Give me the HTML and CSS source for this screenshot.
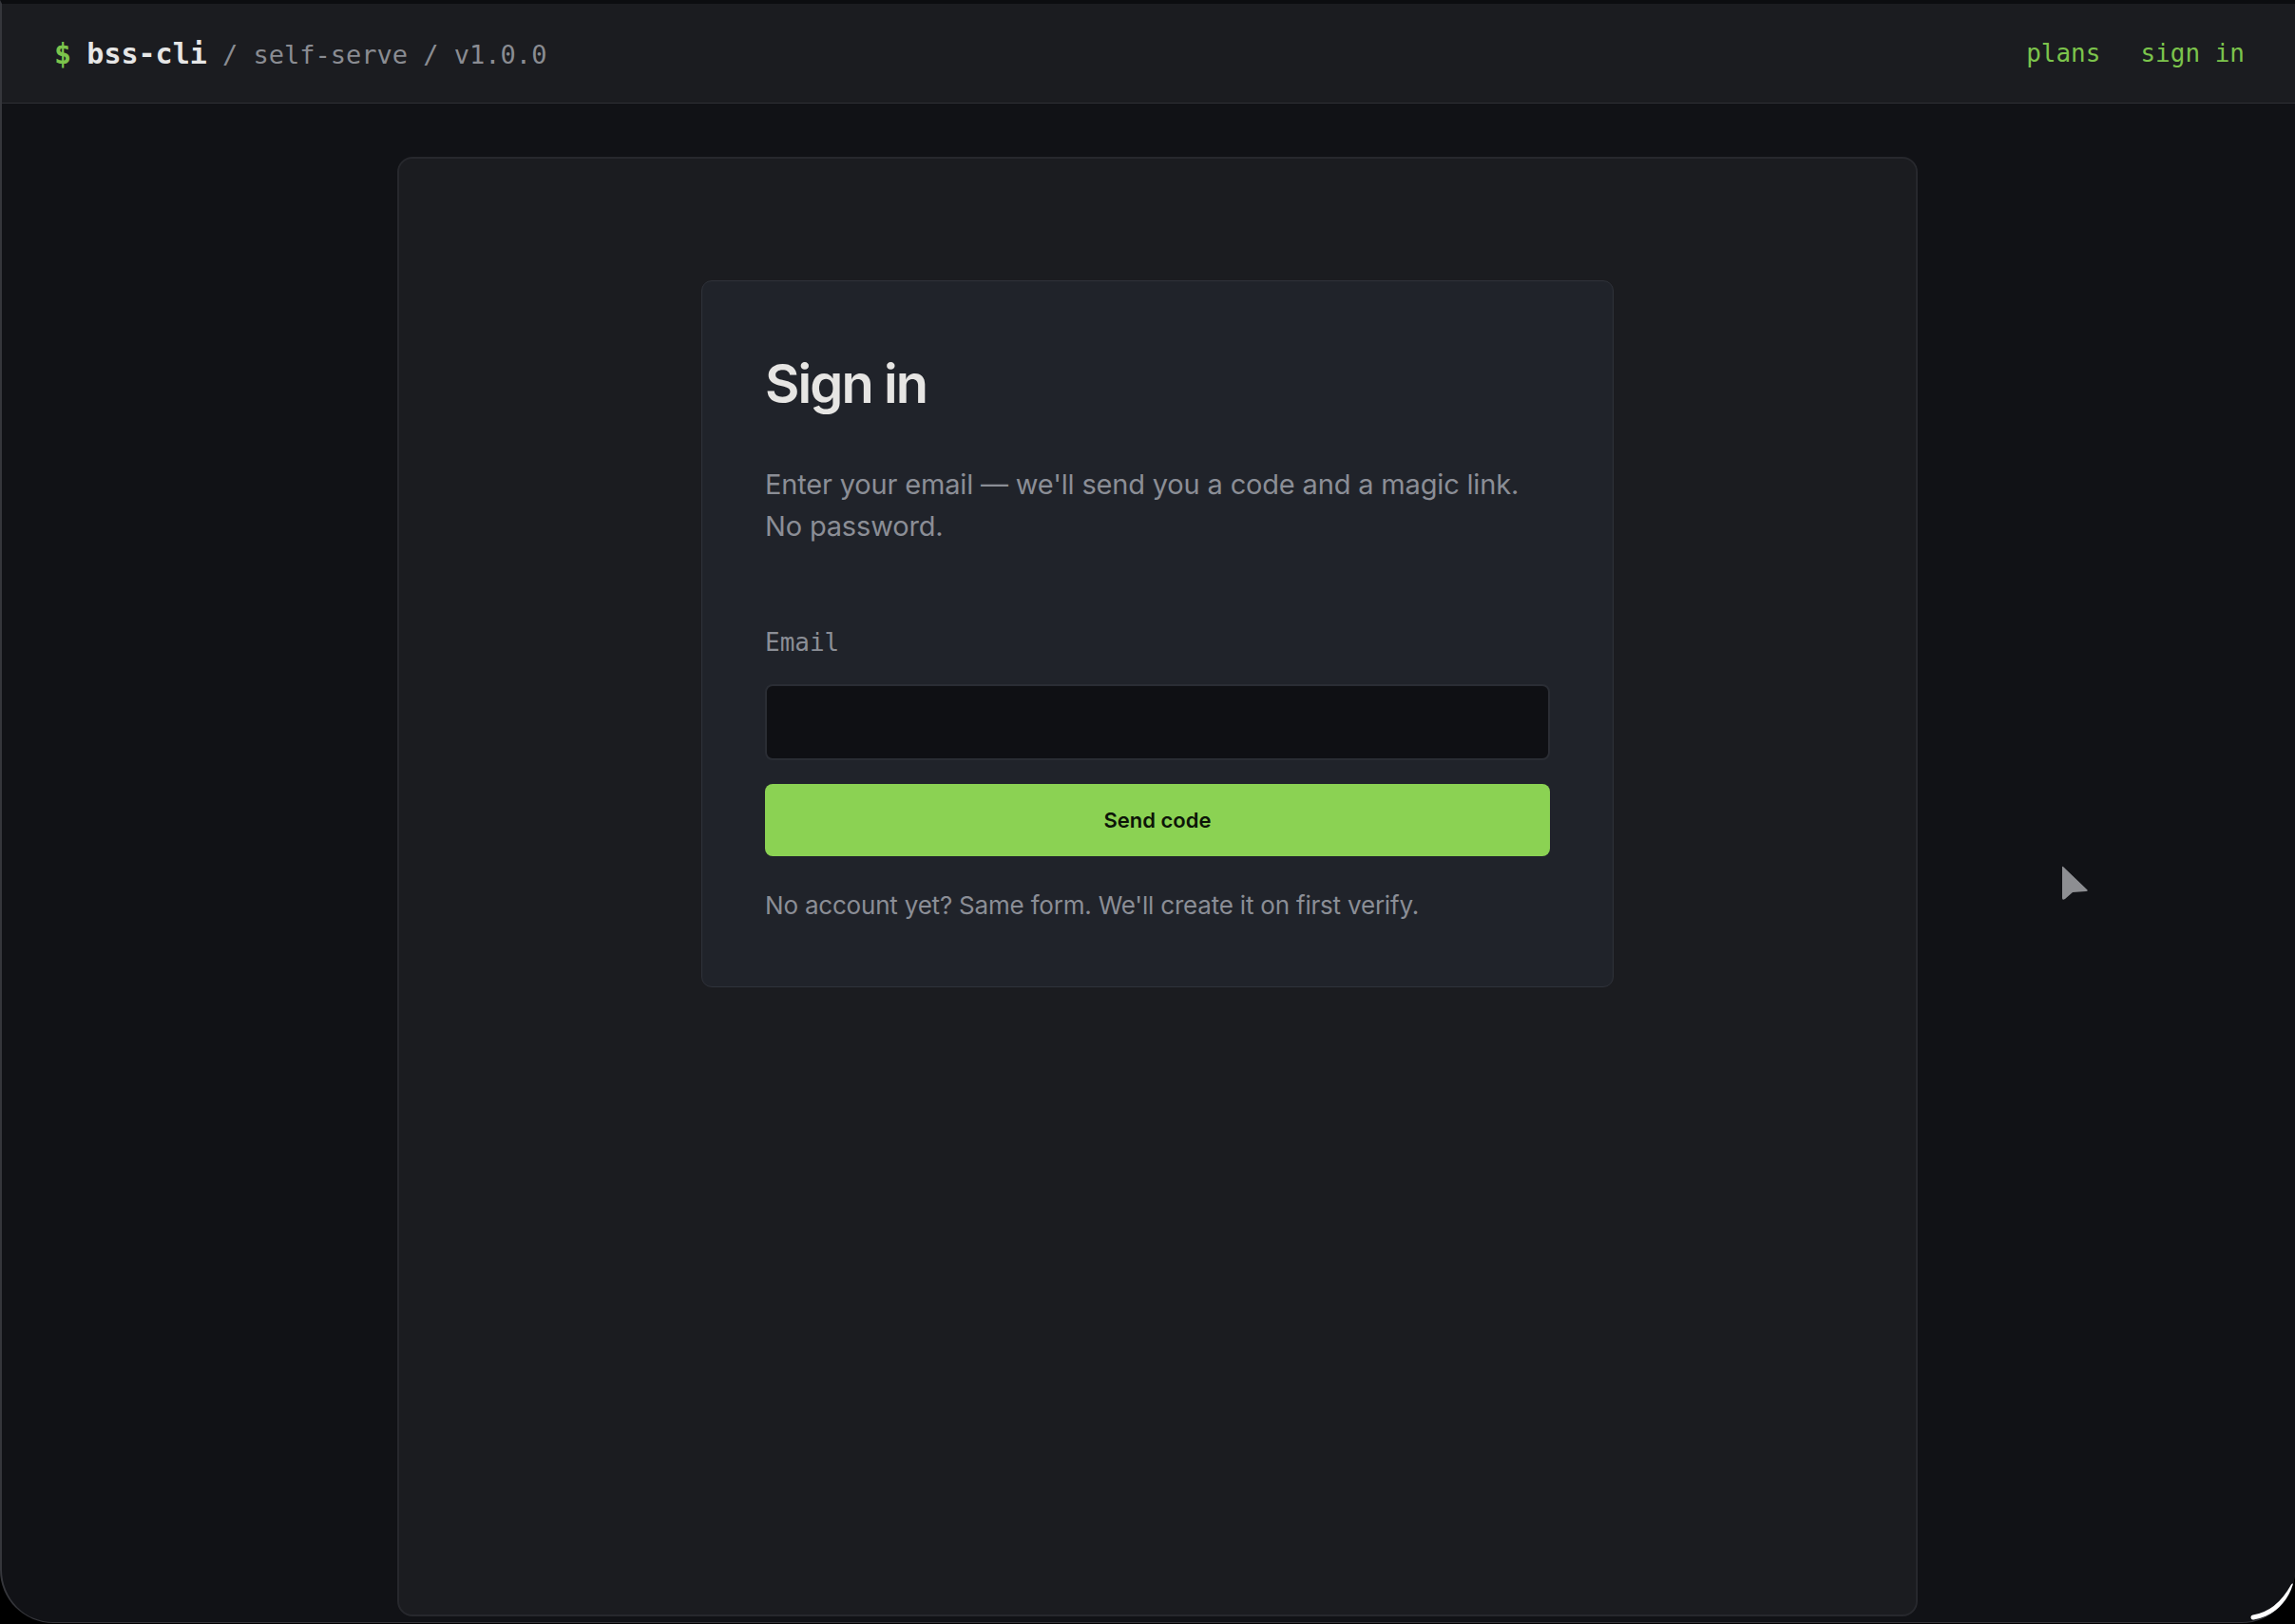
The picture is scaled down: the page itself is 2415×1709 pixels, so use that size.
FILE: index.html
```html
<!DOCTYPE html>
<html lang="en">
<head>
  <meta charset="UTF-8">
  <title>Sign in · bss-cli</title>
  <link rel="stylesheet" href="styles.css">
</head>
<body>
  <div class="window">
    <header class="topbar">
      <div class="brand">
        <span class="prompt">$</span> <span class="name">bss-cli</span><span class="crumbs"> / self-serve / v1.0.0</span>
      </div>
      <nav class="nav">
        <a href="#">plans</a>
        <a href="#">sign in</a>
      </nav>
    </header>

    <main class="main">
      <section class="panel">
        <div class="card">
          <h1>Sign in</h1>
          <p class="lead">Enter your email — we'll send you a code and a magic link. No password.</p>

          <form class="form" onsubmit="return false">
            <label for="email">Email</label>
            <input id="email" type="email" autocomplete="email">
            <button type="submit">Send code</button>
          </form>

          <p class="hint">No account yet? Same form. We'll create it on first verify.</p>
        </div>
      </section>
    </main>

    <!-- mouse pointer left in the capture -->
    <svg class="pointer" width="32" height="40" viewBox="0 0 32 40">
      <path d="M3 2 Q2 1 2 3 L2 35 Q2 38 5 36 L13 29 L27 28 Q30 27.5 28 26 Z" fill="#8d8e92"/>
    </svg>
    <svg class="resize" width="48" height="50" viewBox="0 0 48 50">
      <path d="M4 45 Q30 41 46 12" fill="none" stroke="#fff" stroke-width="5" stroke-linecap="round"/>
    </svg>
  </div>
</body>
</html>
```

FILE: styles.css
```css
* {
  box-sizing: border-box;
}

html, body {
  margin: 0;
  padding: 0;
  background: #000;
}

body {
  font-family: 'Inter', 'Noto Sans', sans-serif;
  color: #e4e4e4;
  overflow: hidden;
}

.window {
  position: relative;
  height: 1708px;
  background: #111216;
  border-top: 4px solid #0c0d10;
  border-left: 2px solid #35363b;
  border-bottom: 1px solid #35363b;
  border-radius: 0 0 56px 56px;
  overflow: hidden;
}

/* top bar */

.topbar {
  display: flex;
  justify-content: space-between;
  align-items: center;
  height: 105px;
  padding: 0 53px 0 55px;
  background: #1b1c20;
  border-bottom: 1px solid #2e2f34;
  font-family: 'DejaVu Sans Mono', 'Liberation Mono', monospace;
}

.brand {
  font-size: 27px;
  white-space: nowrap;
}

.prompt {
  color: #7cc44c;
  font-weight: bold;
  font-size: 30px;
}

.name {
  color: #e6e6e6;
  font-weight: bold;
  font-size: 30px;
}

.crumbs {
  color: #8a8c92;
}

.nav {
  display: flex;
  gap: 42px;
  font-size: 26px;
}

.nav a {
  color: #7cc44c;
  text-decoration: none;
}

/* page */

.main {
  padding: 56px 0 0 19px;
}

.panel {
  width: 1600px;
  height: 1536px;
  margin: 0 auto;
  padding-top: 128px;
  background: #1b1c20;
  border: 2px solid #27282d;
  border-radius: 16px;
}

.card {
  width: 960px;
  margin: 0 auto;
  padding: 74px 66px 65px;
  background: #20232a;
  border: 1px solid #2f323a;
  border-radius: 11px;
}

h1 {
  margin: 0;
  font-size: 56px;
  line-height: 68px;
  font-weight: 600;
  color: #e6e5e3;
  letter-spacing: -1.9px;
}

.lead {
  margin: 50px 0 0;
  font-size: 29px;
  line-height: 44px;
  color: #8b8e96;
  letter-spacing: -0.17px;
}

.form {
  display: flex;
  flex-direction: column;
  margin-top: 84px;
}

label {
  font-family: 'DejaVu Sans Mono', 'Liberation Mono', monospace;
  font-size: 26px;
  line-height: 32px;
  color: #8b8e96;
  margin-bottom: 28px;
}

input {
  height: 80px;
  padding: 0 20px;
  background: #0f1014;
  border: 2px solid #2a2d34;
  border-radius: 8px;
  color: #e4e4e4;
  font-family: inherit;
  font-size: 26px;
  outline: none;
}

button {
  height: 76px;
  margin-top: 25px;
  background: #8bd253;
  color: #0d1508;
  border: none;
  border-radius: 8px;
  font-family: 'Inter', sans-serif;
  font-size: 22px;
  font-weight: 600;
  cursor: pointer;
}

.hint {
  margin: 32px 0 0;
  font-size: 26px;
  line-height: 40px;
  color: #8b8e96;
  letter-spacing: -0.2px;
}

/* overlays */

.pointer {
  position: absolute;
  left: 2166px;
  top: 906px;
}

.resize {
  position: absolute;
  right: 0;
  bottom: 0;
}
```
